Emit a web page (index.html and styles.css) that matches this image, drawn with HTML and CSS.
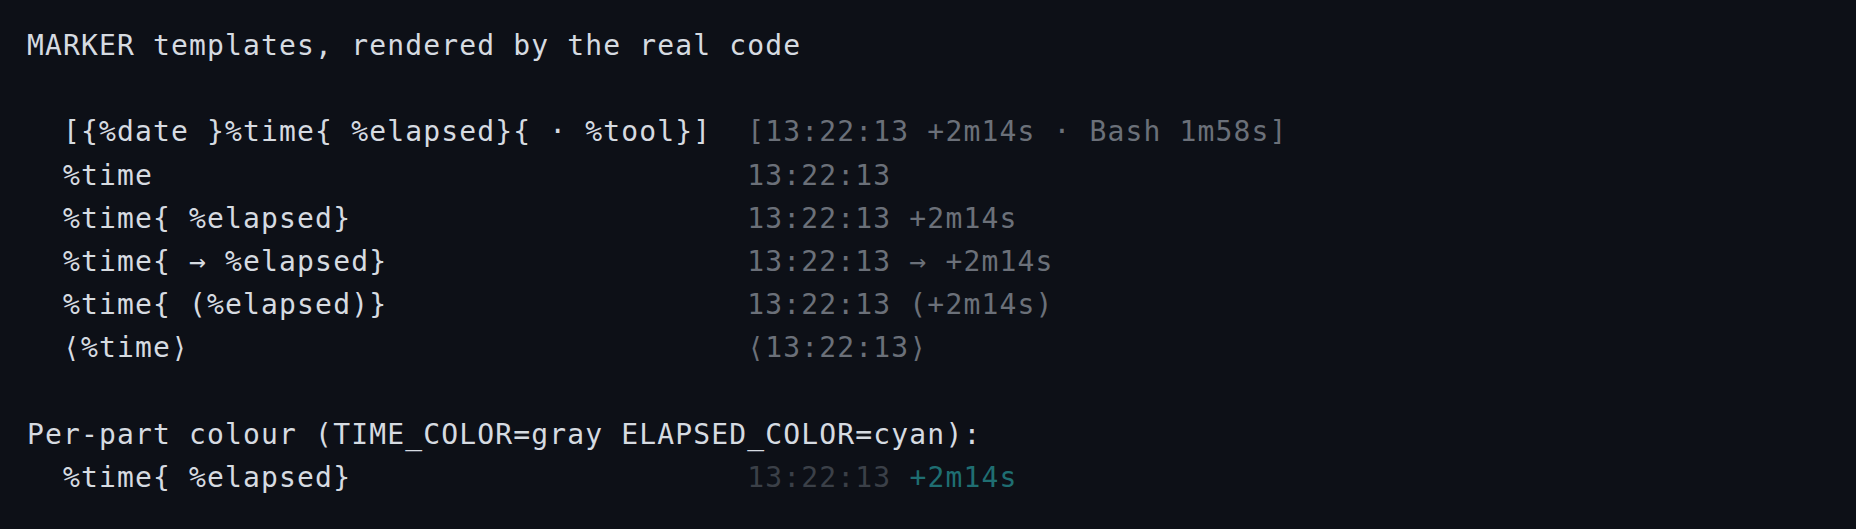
FILE: index.html
```html
<!DOCTYPE html>
<html>
<head>
<meta charset="utf-8">
<link rel="stylesheet" href="styles.css">
</head>
<body>
<pre class="term"><span class="fg">MARKER templates, rendered by the real code</span>

<span class="fg">  [{%date }%time{ %elapsed}{ · %tool}]  </span><span class="mute">[13:22:13 +2m14s · Bash 1m58s]</span>
<span class="fg">  %time                                 </span><span class="mute">13:22:13</span>
<span class="fg">  %time{ %elapsed}                      </span><span class="mute">13:22:13 +2m14s</span>
<span class="fg">  %time{ → %elapsed}                    </span><span class="mute">13:22:13 → +2m14s</span>
<span class="fg">  %time{ (%elapsed)}                    </span><span class="mute">13:22:13 (+2m14s)</span>
<span class="fg">  ⟨%time⟩                               </span><span class="mute">⟨13:22:13⟩</span>

<span class="fg">Per-part colour (TIME_COLOR=gray ELAPSED_COLOR=cyan):</span>
<span class="fg">  %time{ %elapsed}                      </span><span class="dim">13:22:13</span> <span class="cyan">+2m14s</span>
</pre>
</body>
</html>
```
FILE: styles.css
```css
html, body {
  margin: 0;
  padding: 0;
  background: #0d1017;
  height: 100%;
}
.term {
  margin: 0;
  padding: 24px 27px 23px;
  font-family: "DejaVu Sans Mono", monospace;
  font-size: 28px;
  letter-spacing: 1.15px;
  line-height: 43.2px;
  color: #d6dbe1;
  white-space: pre;
}
.fg { color: #d6dbe1; }
.mute { color: #6b7079; }
.dim { color: #3b4048; }
.cyan { color: #1f6e72; }
```
